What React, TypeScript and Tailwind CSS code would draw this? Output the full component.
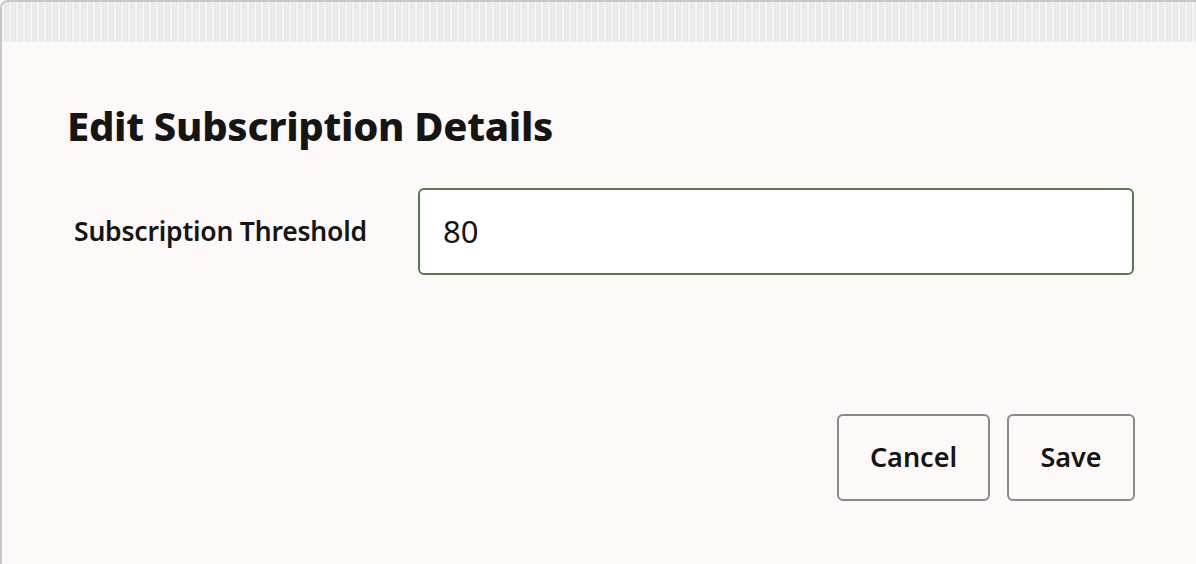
export default function App() {
  return (
    <div
      className="w-[1196px] h-[564px] overflow-hidden bg-[#fcf9f8] border-l-2 border-t-2 border-[#c6c6c6] rounded-tl-[8px] flex flex-col text-[#161513]"
      style={{ fontFamily: '"Noto Sans", "Open Sans", sans-serif' }}
    >
      {/* textured strip behind the dialog */}
      <div className="h-[40px] shrink-0 bg-[#e9e9e9] bg-[repeating-linear-gradient(90deg,#f6f6f6_0px,#f3f3f3_2px,#e5e5e5_3px,#efefef_5px,#e3e3e3_7px)]" />

      <div className="flex-1 flex flex-col pl-[65px] pr-[61px] pt-[61px]">
        <h1 className="text-[40px] leading-[46px] font-extrabold tracking-[-0.3px]">Edit Subscription Details</h1>

        <div className="flex items-center mt-[39px]">
          <label className="w-[351px] pl-[7px] text-[26.5px] font-semibold tracking-[-0.2px]">Subscription Threshold</label>
          <div className="w-[716px] h-[87px] rounded-[6px] border-2 border-[#5b7a4b] bg-white flex items-center pl-[23px] pr-[25px]">
            <span className="text-[31px] text-[#161513]">80</span>
          </div>
        </div>

        <div className="flex justify-end gap-[17px] mt-[139px]">
          <button className="w-[153px] h-[87px] rounded-[6px] border-2 border-[#8b8a89] text-[27px] font-semibold">
            Cancel
          </button>
          <button className="w-[128px] h-[87px] rounded-[6px] border-2 border-[#8b8a89] text-[27px] font-semibold">
            Save
          </button>
        </div>
      </div>
    </div>
  );
}
